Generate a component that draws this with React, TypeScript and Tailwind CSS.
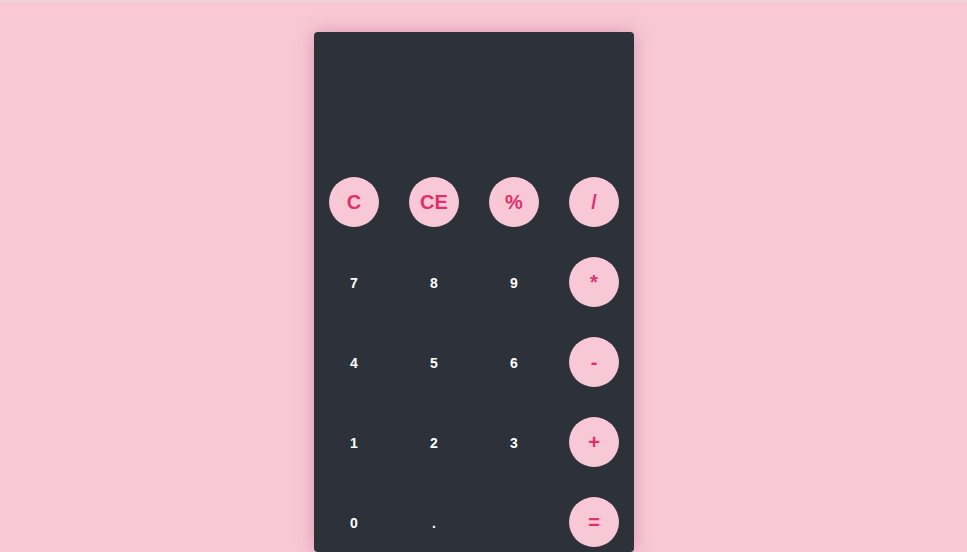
const rows: { label: string; op: boolean }[][] = [
  [
    { label: "C", op: true },
    { label: "CE", op: true },
    { label: "%", op: true },
    { label: "/", op: true },
  ],
  [
    { label: "7", op: false },
    { label: "8", op: false },
    { label: "9", op: false },
    { label: "*", op: true },
  ],
  [
    { label: "4", op: false },
    { label: "5", op: false },
    { label: "6", op: false },
    { label: "-", op: true },
  ],
  [
    { label: "1", op: false },
    { label: "2", op: false },
    { label: "3", op: false },
    { label: "+", op: true },
  ],
  [
    { label: "0", op: false },
    { label: ".", op: false },
    { label: "", op: false },
    { label: "=", op: true },
  ],
];

export default function App() {
  return (
    <div className="min-h-screen bg-[#f8c8d6] font-['Liberation_Sans',Arial,sans-serif]">
      <div className="h-px bg-[#dedede]" />
      <div className="flex justify-center pt-[31px] pr-[19px]">
        <div className="h-[520px] w-[320px] overflow-hidden rounded-[4px] bg-[#2d313a] shadow-[0_0_18px_rgba(160,60,90,0.35)]">
          {/* display */}
          <div className="h-[130px]" />
          <div className="grid grid-cols-4">
            {rows.flat().map((key, i) => (
              <div key={i} className="flex h-20 items-center justify-center">
                {key.label === "" ? null : key.op ? (
                  <button className="flex h-[50px] w-[50px] items-center justify-center rounded-full bg-[#f8c8d6] text-[20px] font-bold text-[#e1306c]">
                    {key.label}
                  </button>
                ) : (
                  <button className="flex h-[50px] w-[50px] items-center justify-center pt-[2px] text-[14px] font-bold text-white">
                    {key.label}
                  </button>
                )}
              </div>
            ))}
          </div>
        </div>
      </div>
    </div>
  );
}
